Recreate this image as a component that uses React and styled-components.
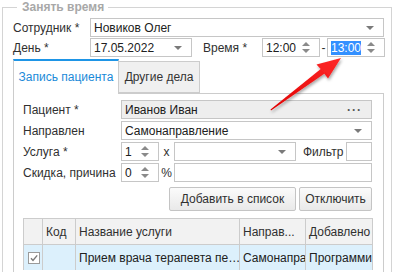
import React from "react";
import styled, { createGlobalStyle } from "styled-components";

const GlobalStyle = createGlobalStyle`
  html, body {
    margin: 0;
    padding: 0;
    background: #ffffff;
    overflow: hidden;
  }
  body {
    font-family: "Liberation Sans", Arial, sans-serif;
    font-size: 12px;
    color: #303030;
  }
`;

const Page = styled.div`
  position: relative;
  width: 394px;
  height: 272px;
  overflow: hidden;
`;

const Group = styled.fieldset`
  margin: 0 2px;
  padding: 4px 7px 10px 10px;
  border: 1px solid #d4d4d4;
  min-width: 0;
  height: 300px;
`;

const Legend = styled.legend`
  margin-left: 4px;
  padding: 0 4px 0 5px;
  font-size: 12px;
  line-height: 14px;
  font-weight: bold;
  color: #a8a8a8;
`;

const FormRow = styled.div`
  display: flex;
  align-items: center;
  height: 19px;
  margin-bottom: ${(p) => p.$gap || 1}px;
`;

const Label = styled.div`
  width: ${(p) => p.$w}px;
  padding-left: ${(p) => p.$pad || 0}px;
  box-sizing: border-box;
  flex: none;
  white-space: nowrap;
  color: #303030;
`;

const Field = styled.div`
  position: relative;
  box-sizing: border-box;
  height: ${(p) => p.$h || 19}px;
  width: ${(p) => (p.$w ? `${p.$w}px` : "auto")};
  flex: ${(p) => (p.$w ? "none" : "1")};
  border: 1px solid #c6c6c6;
  background: ${(p) => (p.$gray ? "#eeeeee" : "#ffffff")};
  display: flex;
  align-items: center;
  padding-left: 3px;
  color: #202020;
  white-space: nowrap;
  overflow: hidden;
`;

const DropArrow = styled.span`
  position: absolute;
  right: 9px;
  top: 7px;
  width: 0;
  height: 0;
  border-left: 4px solid transparent;
  border-right: 4px solid transparent;
  border-top: 4px solid #7a7a7a;
`;

const Spin = styled.span`
  position: absolute;
  right: 9px;
  top: 3px;
  display: flex;
  flex-direction: column;
  gap: 3px;
`;

const SpinUp = styled.span`
  width: 0;
  height: 0;
  border-left: 4px solid transparent;
  border-right: 4px solid transparent;
  border-bottom: 4px solid #8a8a8a;
`;

const SpinDown = styled.span`
  width: 0;
  height: 0;
  border-left: 4px solid transparent;
  border-right: 4px solid transparent;
  border-top: 4px solid #8a8a8a;
`;

const Dots = styled.span`
  position: absolute;
  right: 9px;
  top: 2px;
  letter-spacing: 1px;
  color: #555;
  font-weight: bold;
`;

const Selected = styled.span`
  background: #3390ff;
  color: #ffffff;
`;

const Sep = styled.span`
  width: ${(p) => p.$w}px;
  flex: none;
  text-align: center;
  color: #303030;
`;

const Tabs = styled.div`
  display: flex;
  align-items: flex-end;
  margin-top: 2px;
  height: 34px;
  position: relative;
  z-index: 1;
`;

const Tab = styled.div`
  box-sizing: border-box;
  height: ${(p) => (p.$active ? 35 : 32)}px;
  width: ${(p) => p.$w}px;
  display: flex;
  align-items: center;
  justify-content: center;
  border: 1px solid #cccccc;
  border-top: ${(p) => (p.$active ? "2px solid #1e95e6" : "1px solid #cccccc")};
  border-bottom: ${(p) => (p.$active ? "none" : "1px solid #cccccc")};
  border-left: ${(p) => (p.$active ? "1px solid #cccccc" : "none")};
  background: ${(p) => (p.$active ? "#ffffff" : "#f0f0f0")};
  color: ${(p) => (p.$active ? "#1a8ad8" : "#333333")};
  margin-bottom: ${(p) => (p.$active ? -1 : 0)}px;
  padding-bottom: 1px;
`;

const Panel = styled.div`
  border: 1px solid #cccccc;
  padding: 6px 11px 0 9px;
  height: 200px;
`;

const ButtonRow = styled.div`
  display: flex;
  justify-content: flex-end;
  gap: 3px;
  margin-top: 5px;
`;

const Button = styled.button`
  box-sizing: border-box;
  height: 24px;
  width: ${(p) => p.$w}px;
  border: 1px solid #c4c4c4;
  border-radius: 2px;
  background: linear-gradient(#fbfbfb, #e9e9e9);
  font-family: inherit;
  font-size: 12px;
  color: #303030;
  padding: 0;
`;

const Table = styled.table`
  margin-top: 7px;
  width: 349px;
  table-layout: fixed;
  border-collapse: collapse;
`;

const Th = styled.th`
  height: 25px;
  background: #f2f2f2;
  border: 1px solid #cccccc;
  font-weight: normal;
  text-align: left;
  padding: 0 3px;
  color: #303030;
  white-space: nowrap;
  overflow: hidden;
`;

const Td = styled.td`
  height: 25px;
  background: #dcf0fc;
  border-left: 1px solid #cccccc;
  border-right: ${(p) => (p.$lined ? "1px solid #cccccc" : "none")};
  padding: 0 3px;
  color: #202020;
  white-space: nowrap;
  overflow: hidden;
`;

const Check = styled.span`
  display: inline-block;
  box-sizing: border-box;
  width: 12px;
  height: 12px;
  border: 1px solid #9a9a9a;
  background: #ffffff;
  vertical-align: middle;
  margin-left: 1px;
  position: relative;
  svg {
    position: absolute;
    left: 0;
    top: 0;
  }
`;

const Arrow = styled.svg`
  position: absolute;
  left: 0;
  top: 0;
  pointer-events: none;
`;

const Spinner = ({ w, children }) => (
  <Field $w={w}>
    {children}
    <Spin>
      <SpinUp />
      <SpinDown />
    </Spin>
  </Field>
);

const Combo = ({ w, children }) => (
  <Field $w={w}>
    {children}
    <DropArrow />
  </Field>
);

export default function App() {
  return (
    <Page>
      <GlobalStyle />
      <Group>
        <Legend>Занять время</Legend>
        <FormRow>
          <Label $w={77}>Сотрудник *</Label>
          <Combo>Новиков Олег</Combo>
        </FormRow>
        <FormRow>
          <Label $w={77}>День *</Label>
          <Combo w={102}>17.05.2022</Combo>
          <Label $w={70} $pad={11}>Время *</Label>
          <Spinner w={58}>12:00</Spinner>
          <Sep $w={7}>-</Sep>
          <Spinner w={58}>
            <Selected>13:00</Selected>
          </Spinner>
        </FormRow>

        <Tabs>
          <Tab $active $w={106}>Запись пациента</Tab>
          <Tab $w={81}>Другие дела</Tab>
        </Tabs>
        <Panel>
          <FormRow $gap={2}>
            <Label $w={98}>Пациент *</Label>
            <Field $gray>
              Иванов Иван
              <Dots>···</Dots>
            </Field>
          </FormRow>
          <FormRow $gap={2}>
            <Label $w={98}>Направлен</Label>
            <Combo>Самонаправление</Combo>
          </FormRow>
          <FormRow $gap={2}>
            <Label $w={98}>Услуга *</Label>
            <Spinner w={38}>1</Spinner>
            <Sep $w={15}>x</Sep>
            <Combo w={122}></Combo>
            <Label $w={50} $pad={7}>Фильтр</Label>
            <Field />
          </FormRow>
          <FormRow>
            <Label $w={98}>Скидка, причина</Label>
            <Spinner w={38}>0</Spinner>
            <Sep $w={15}>%</Sep>
            <Field />
          </FormRow>
          <ButtonRow>
            <Button $w={127}>Добавить в список</Button>
            <Button $w={73}>Отключить</Button>
          </ButtonRow>
          <Table>
            <colgroup>
              <col style={{ width: 19 }} />
              <col style={{ width: 33 }} />
              <col style={{ width: 164 }} />
              <col style={{ width: 66 }} />
              <col style={{ width: 67 }} />
            </colgroup>
            <thead>
              <tr>
                <Th></Th>
                <Th>Код</Th>
                <Th>Название услуги</Th>
                <Th>Направ...</Th>
                <Th>Добавлено</Th>
              </tr>
            </thead>
            <tbody>
              <tr>
                <Td>
                  <Check>
                    <svg width="10" height="10" viewBox="0 0 10 10">
                      <path d="M2 5.2 L4 7.4 L8.2 2.4" fill="none" stroke="#7a7a7a" strokeWidth="1.4" />
                    </svg>
                  </Check>
                </Td>
                <Td></Td>
                <Td>Прием врача терапевта пе…</Td>
                <Td>Самонапра</Td>
                <Td $lined>Программи</Td>
              </tr>
            </tbody>
          </Table>
        </Panel>
      </Group>

      <Arrow width="394" height="272" viewBox="0 0 394 272">
        <defs>
          <linearGradient id="arrowFill" x1="0" y1="1" x2="1" y2="0">
            <stop offset="0" stopColor="#e00000" />
            <stop offset="1" stopColor="#ff2a2a" />
          </linearGradient>
          <filter id="arrowShadow" x="-20%" y="-20%" width="140%" height="140%">
            <feDropShadow dx="1" dy="2" stdDeviation="1.5" floodColor="#000" floodOpacity="0.35" />
          </filter>
        </defs>
        <polygon
          points="271,110.5 324.3,73.8 328,78.5 341,58 316.5,64.5 320.7,69 270.5,109.5"
          fill="url(#arrowFill)"
          filter="url(#arrowShadow)"
        />
      </Arrow>
    </Page>
  );
}
